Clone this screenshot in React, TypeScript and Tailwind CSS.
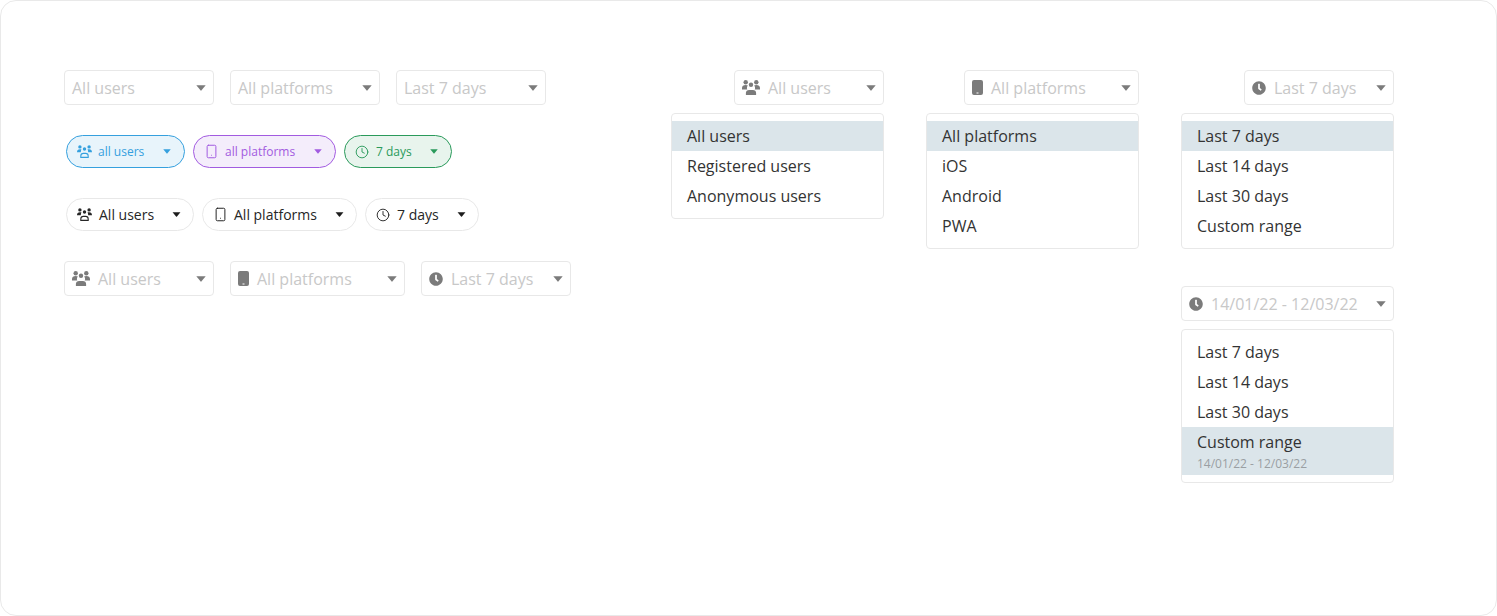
import React from "react";
import { FaClock } from "react-icons/fa";
import { Clock, Smartphone } from "lucide-react";

function Caret({ className = "", size = "w-[10px] h-[6px]" }: { className?: string; size?: string }) {
  return (
    <svg viewBox="0 0 10 6" className={`shrink-0 ${size} ${className}`}>
      <path d="M0.3 0.3h9.4L5.3 5.6a.4.4 0 0 1-.6 0z" fill="currentColor" />
    </svg>
  );
}

function UsersLine({ className = "" }: { className?: string }) {
  return (
    <svg width="15" height="13" viewBox="0 0 15 13" className={`shrink-0 ${className}`}>
      <circle cx="2.9" cy="1.9" r="1.7" fill="currentColor" />
      <circle cx="12.1" cy="1.9" r="1.7" fill="currentColor" />
      <circle cx="7.5" cy="4" r="1.7" fill="currentColor" />
      <path d="M0 7.2c0-2 1-3 2.9-3 .7 0 1.2.1 1.6.4-.4.6-.7 1.5-.7 2.6H0zM15 7.2c0-2-1-3-2.9-3-.7 0-1.2.1-1.6.4.4.6.7 1.5.7 2.6H15z" fill="currentColor" />
      <path d="M3.8 12.4v-1.4c0-1.6 1.1-2.6 2.6-2.6h2.2c1.5 0 2.6 1 2.6 2.6v1.4z" fill="none" stroke="currentColor" strokeWidth="1.1" />
    </svg>
  );
}

function UsersFilled({ className = "" }: { className?: string }) {
  return (
    <svg width="18" height="15" viewBox="0 0 18 15" className={`shrink-0 ${className}`}>
      <circle cx="3.7" cy="2.3" r="2.2" fill="currentColor" />
      <circle cx="14.3" cy="2.3" r="2.2" fill="currentColor" />
      <circle cx="9" cy="4.8" r="2.2" fill="currentColor" />
      <path d="M0 9.6V8c0-2 1.4-3 3.7-3 1 0 1.7.2 2.2.6-.6.6-1 1.5-1 2.4 0 .6.1 1.1.4 1.6H0zM18 9.6V8c0-2-1.4-3-3.7-3-1 0-1.7.2-2.2.6.6.6 1 1.5 1 2.4 0 .6-.1 1.1-.4 1.6H18z" fill="currentColor" />
      <path d="M3.9 15v-2c0-1.9 1.3-3 3.2-3h3.8c1.9 0 3.2 1.1 3.2 3v2z" fill="currentColor" />
    </svg>
  );
}

function PhoneFilled({ className = "" }: { className?: string }) {
  return (
    <svg width="11" height="15" viewBox="0 0 11 15" className={`shrink-0 ${className}`}>
      <path fillRule="evenodd" d="M2 0h7a2 2 0 0 1 2 2v11a2 2 0 0 1-2 2H2a2 2 0 0 1-2-2V2a2 2 0 0 1 2-2zM4.5 12.6v.8h2v-.8z" fill="currentColor" />
    </svg>
  );
}

function Plain({ label, width }: { label: string; width: string }) {
  return (
    <div className={`${width} h-[35px] flex items-center justify-between pl-[7px] pr-[7px] border border-[#e8e8e8] rounded-[4px] bg-white`}>
      <span className="text-[16px] text-[#c8c8c8]">{label}</span>
      <Caret className="text-[#7b7b7b]" />
    </div>
  );
}

function IconSelect({ icon, label, width, gap }: { icon: React.ReactNode; label: string; width: string; gap: string }) {
  return (
    <div className={`${width} h-[35px] flex items-center justify-between pl-[7px] pr-[7px] border border-[#e8e8e8] rounded-[4px] bg-white`}>
      <span className={`flex items-center ${gap}`}>
        {icon}
        <span className="text-[16px] text-[#c8c8c8]">{label}</span>
      </span>
      <Caret className="text-[#7b7b7b]" />
    </div>
  );
}

function ColorChip({ icon, label, width, box, text, iconGap }: { icon: React.ReactNode; label: string; width: string; box: string; text: string; iconGap: string }) {
  return (
    <div className={`${width} h-[33px] flex items-center justify-between pl-[10px] pr-[13px] border rounded-full ${box}`}>
      <span className={`flex items-center ${iconGap}`}>
        {icon}
        <span className={`text-[12px] pt-[1px] ${text}`}>{label}</span>
      </span>
      <Caret className={text} size="w-[8px] h-[5px]" />
    </div>
  );
}

function DarkChip({ icon, label, width, iconGap }: { icon: React.ReactNode; label: string; width: string; iconGap: string }) {
  return (
    <div className={`${width} h-[33px] flex items-center justify-between pl-[10px] pr-[12px] border border-[#e8e8e8] rounded-full bg-white`}>
      <span className={`flex items-center ${iconGap}`}>
        {icon}
        <span className="text-[14px] text-[#262626]">{label}</span>
      </span>
      <Caret className="text-[#1c1c1c]" size="w-[9px] h-[5px]" />
    </div>
  );
}

function Menu({ items, active, sub }: { items: string[]; active: string; sub?: string }) {
  return (
    <div className="w-[213px] mt-[8px] py-[7px] border border-[#e8e8e8] rounded-[4px] bg-white">
      {items.map((item) => (
        <div key={item} className={`px-[15px] text-[16px] text-[#333333] ${item === active ? "bg-[#dbe5ea]" : ""} ${item === active && sub ? "h-[48px]" : "h-[30px]"}`}>
          <div className="h-[30px] leading-[30px]">{item}</div>
          {item === active && sub ? <div className="text-[12px] leading-[14px] text-[#9a9fa3]">{sub}</div> : null}
        </div>
      ))}
    </div>
  );
}

const grayIcon = "text-[#7b7b7b] shrink-0";
const days = ["Last 7 days", "Last 14 days", "Last 30 days", "Custom range"];

export default function App() {
  return (
    <div className="w-[1497px] h-[616px] box-border border border-[#e9e9e9] rounded-[16px] bg-white flex justify-between pl-[63px] pr-[102px] pt-[69px] overflow-hidden font-['Open_Sans',sans-serif]">
      <div className="flex flex-col items-start gap-[30px]">
        <div className="flex gap-[16px]">
          <Plain label="All users" width="w-[150px]" />
          <Plain label="All platforms" width="w-[150px]" />
          <Plain label="Last 7 days" width="w-[150px]" />
        </div>
        <div className="flex gap-[8px] pl-[2px]">
          <ColorChip width="w-[119px]" box="border-[#35a0de] bg-[#e8f4fb]" text="text-[#35a0de]" iconGap="gap-[6px]" label="all users" icon={<UsersLine className="text-[#35a0de]" />} />
          <ColorChip width="w-[143px]" box="border-[#a25be0] bg-[#f4edfb]" text="text-[#a25be0]" iconGap="gap-[6px]" label="all platforms" icon={<Smartphone size={15} strokeWidth={1.6} className="text-[#a25be0]" />} />
          <ColorChip width="w-[108px]" box="border-[#2a9a5b] bg-[#e8f4ed]" text="text-[#2a9a5b]" iconGap="gap-[7px]" label="7 days" icon={<Clock size={14} strokeWidth={1.6} className="text-[#2a9a5b]" />} />
        </div>
        <div className="flex gap-[8px] pl-[2px]">
          <DarkChip width="w-[128px]" iconGap="gap-[7px]" label="All users" icon={<UsersLine className="text-[#262626]" />} />
          <DarkChip width="w-[155px]" iconGap="gap-[6px]" label="All platforms" icon={<Smartphone size={15} strokeWidth={1.6} className="text-[#262626]" />} />
          <DarkChip width="w-[114px]" iconGap="gap-[7px]" label="7 days" icon={<Clock size={14} strokeWidth={1.6} className="text-[#262626]" />} />
        </div>
        <div className="flex gap-[16px]">
          <IconSelect width="w-[150px]" gap="gap-[8px]" label="All users" icon={<UsersFilled className={grayIcon} />} />
          <IconSelect width="w-[175px]" gap="gap-[8px]" label="All platforms" icon={<PhoneFilled className={grayIcon} />} />
          <IconSelect width="w-[150px]" gap="gap-[8px]" label="Last 7 days" icon={<FaClock size={14} className={grayIcon} />} />
        </div>
      </div>
      <div className="flex gap-[42px]">
        <div className="flex flex-col items-end w-[213px]">
          <IconSelect width="w-[150px]" gap="gap-[8px]" label="All users" icon={<UsersFilled className={grayIcon} />} />
          <Menu items={["All users", "Registered users", "Anonymous users"]} active="All users" />
        </div>
        <div className="flex flex-col items-end w-[213px]">
          <IconSelect width="w-[175px]" gap="gap-[8px]" label="All platforms" icon={<PhoneFilled className={grayIcon} />} />
          <Menu items={["All platforms", "iOS", "Android", "PWA"]} active="All platforms" />
        </div>
        <div className="flex flex-col items-end w-[213px]">
          <IconSelect width="w-[150px]" gap="gap-[8px]" label="Last 7 days" icon={<FaClock size={14} className={grayIcon} />} />
          <Menu items={days} active="Last 7 days" />
          <div className="h-[37px]" />
          <IconSelect width="w-[213px]" gap="gap-[8px]" label="14/01/22 - 12/03/22" icon={<FaClock size={14} className={grayIcon} />} />
          <Menu items={days} active="Custom range" sub="14/01/22 - 12/03/22" />
        </div>
      </div>
    </div>
  );
}
